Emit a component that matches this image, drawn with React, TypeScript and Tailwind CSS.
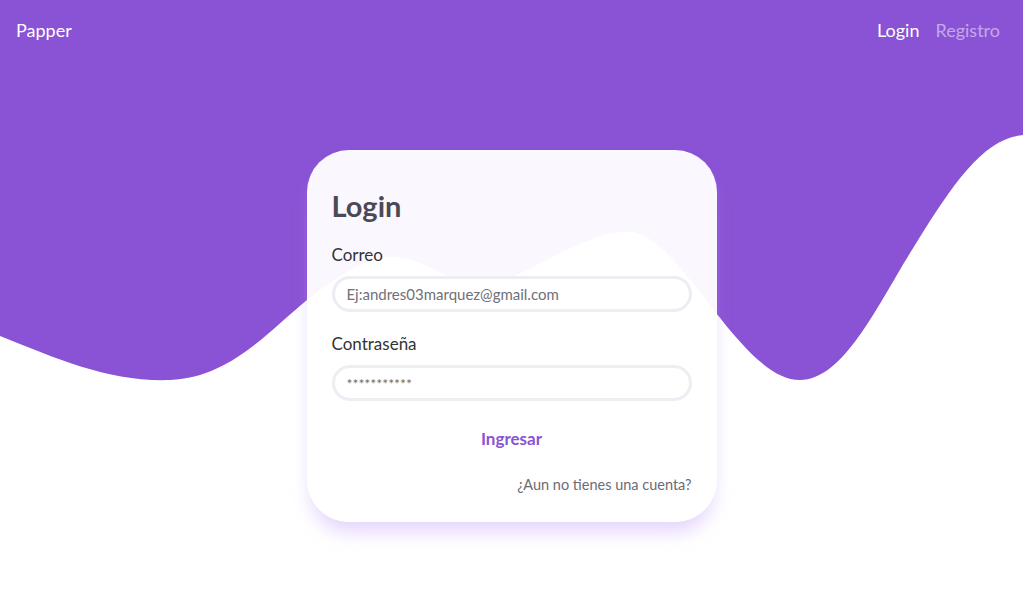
import React from 'react'

const Wave = () => (
  <svg
    className="absolute inset-x-0 top-0 w-full h-[400px]"
    viewBox="0 0 1023 400"
    preserveAspectRatio="none"
  >
    <path
      fill="#8a52d4"
      d="M0,336 C60,360 110,382 170,380 C230,378 270,330 307,300 C340,275 370,255 395,257 C430,260 450,285 480,285 C520,285 580,230 630,232 C680,234 740,380 800,380 C845,380 880,300 915,245 C955,180 985,138 1023,135 V0 H0 Z"
    />
  </svg>
)

export default function App() {
  return (
    <div className="relative min-h-screen bg-white overflow-hidden font-['Lato','Noto_Sans',sans-serif]">
      <Wave />

      {/* Navbar */}
      <nav className="relative flex items-center justify-between h-[60px] px-4">
        <span className="text-white text-[18px]">Papper</span>
        <div className="flex items-center gap-4 pr-[7px]">
          <a className="text-white text-[18px]">Login</a>
          <a className="text-white/50 text-[18px]">Registro</a>
        </div>
      </nav>

      {/* Card */}
      <main className="relative flex justify-center pt-[90px]">
        <div className="w-[410px] h-[372px] rounded-[42px] bg-white/[0.96] px-[25px] pt-[41px] shadow-[0_14px_18px_-4px_rgba(190,150,250,0.4)]">
          <h1 className="text-[29px] font-bold text-[#4a4a55] leading-none">Login</h1>

          <label className="block mt-[26px] text-[17px] text-[#333] leading-none">Correo</label>
          <input
            className="mt-[13px] w-full h-[36px] rounded-full border-[3px] border-[#efecf3] bg-white px-[12px] text-[15px] text-[#666] placeholder:text-[#707079] outline-none"
            placeholder="Ej:andres03marquez@gmail.com"
          />

          <label className="block mt-[23px] text-[17px] text-[#333] leading-none">Contraseña</label>
          <input
            className="mt-[13px] w-full h-[36px] rounded-full border-[3px] border-[#efecf3] bg-white px-[12px] text-[14px] text-[#666] placeholder:text-[#707079] outline-none"
            placeholder="***********"
          />

          <div className="flex justify-center mt-[29px]">
            <button className="text-[17px] font-bold text-[#8a52d4] leading-none">Ingresar</button>
          </div>

          <div className="flex justify-end mt-[31px]">
            <a className="text-[14.5px] text-[#6b6b75] leading-none">¿Aun no tienes una cuenta?</a>
          </div>
        </div>
      </main>
    </div>
  )
}
